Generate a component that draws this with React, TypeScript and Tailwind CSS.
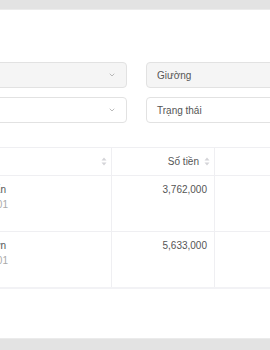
import { ChevronDown } from "lucide-react";

const rows = [
  { name: "Nguyễn Văn Tuấn", code: "HD0001", amount: "3,762,000" },
  { name: "Lê Hoàng Sơn", code: "HD0001", amount: "5,633,000" },
];

function SortIcon() {
  return (
    <svg width="6" height="9" viewBox="0 0 6 9" className="shrink-0">
      <path d="M3 0.5 L5.5 3.5 H0.5 Z" fill="#d4d4d8" />
      <path d="M3 8.5 L5.5 5.5 H0.5 Z" fill="#d4d4d8" />
    </svg>
  );
}

function Select({ label, muted, chevron }: { label?: string; muted?: boolean; chevron?: boolean }) {
  return (
    <div
      className={`flex h-[26px] w-[200px] items-center justify-between rounded-[4px] border border-[#e2e2e2] px-[10px] text-[10px] text-[#555] ${
        muted ? "bg-[#f5f5f5]" : "bg-white"
      }`}
    >
      <span>{label}</span>
      {chevron && <ChevronDown size={8} strokeWidth={2} className="text-[#999]" />}
    </div>
  );
}

export default function App() {
  return (
    <div className="flex h-[350px] w-[270px] flex-col overflow-hidden bg-white font-['Liberation_Sans',Arial,sans-serif]">
      <div className="h-[10px] shrink-0 border-b border-[#ececec] bg-[#e3e3e3]" />

      <div className="min-h-0 flex-1 overflow-hidden">
        <div className="-ml-[150px] w-[600px] pt-[52px]">
          {/* filters */}
          <div className="flex flex-col gap-[9px]">
            <div className="flex gap-[19px] pl-[77px]">
              <Select muted chevron />
              <Select muted label="Giường" />
            </div>
            <div className="flex gap-[19px] pl-[77px]">
              <Select chevron />
              <Select label="Trạng thái" />
            </div>
          </div>

          {/* table */}
          <div className="mt-[24px] border-t border-[#efeff2] text-[10px]">
            <div className="flex h-[27px]">
              <div className="flex w-[261px] items-center justify-end pr-[4px]">
                <SortIcon />
              </div>
              <div className="flex w-[103px] items-center justify-end gap-[5px] border-l border-[#efeff2] pr-[4px] text-[#555]">
                <span>Số tiền</span>
                <SortIcon />
              </div>
              <div className="flex-1 border-l border-[#efeff2]" />
            </div>

            {rows.map((r) => (
              <div key={r.amount} className="flex h-[56px] border-t border-[#efeff2]">
                <div className="w-[261px] pt-[7px]">
                  <div className="w-[158px] text-right leading-[14px]">
                    <div className="pr-[2px] text-[#555]">{r.name}</div>
                    <div className="mt-[1px] text-[#aaa]">{r.code}</div>
                  </div>
                </div>
                <div className="w-[103px] border-l border-[#efeff2] pr-[7px] pt-[7px] text-right leading-[14px] text-[#555]">
                  {r.amount}
                </div>
                <div className="flex-1 border-l border-[#efeff2]" />
              </div>
            ))}
            <div className="h-[2px] bg-[#f2f2f5]" />
          </div>
        </div>
      </div>

      <div className="h-[12px] shrink-0 border-t border-[#ebebeb] bg-[#e3e3e3]" />
    </div>
  );
}
